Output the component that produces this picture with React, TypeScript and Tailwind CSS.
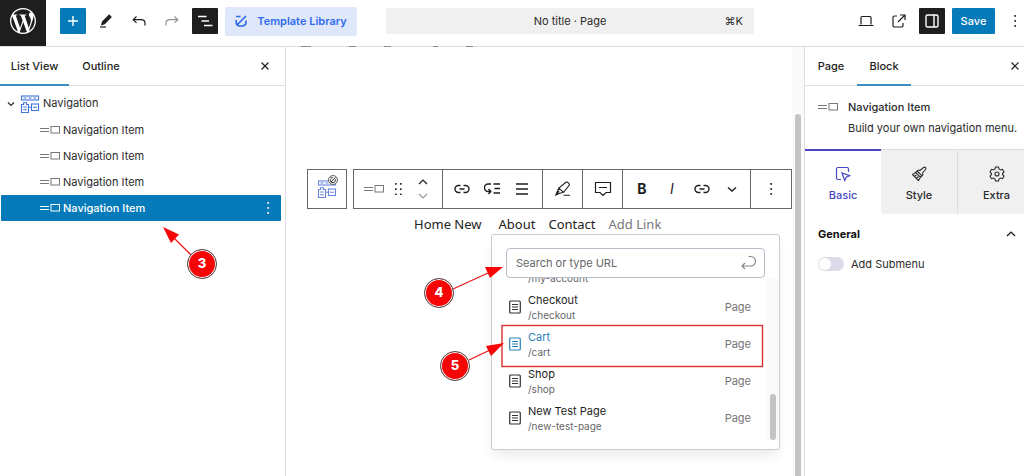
import type { ReactNode } from "react";

type IconProps = { children: ReactNode; size?: string; box?: string; weight?: number };

function Icon({ children, size = "size-4", box = "0 0 16 16", weight = 1.2 }: IconProps) {
  return (
    <svg className={`${size} shrink-0`} viewBox={box} fill="none" stroke="currentColor" strokeWidth={weight} aria-hidden="true">
      {children}
    </svg>
  );
}

const Close = () => (
  <Icon size="size-3" box="0 0 12 12">
    <path d="M2.5 2.5l7 7M9.5 2.5l-7 7" />
  </Icon>
);

const Dots = () => (
  <Icon size="size-4">
    <g fill="currentColor" stroke="none">
      <rect x="7.2" y="2" width="1.9" height="1.9" rx=".8" />
      <rect x="7.2" y="7" width="1.9" height="1.9" rx=".8" />
      <rect x="7.2" y="12" width="1.9" height="1.9" rx=".8" />
    </g>
  </Icon>
);

const ItemGlyph = () => (
  <Icon size="w-5 h-3" box="0 0 20 12" weight={1}>
    <path d="M0 4.500h9M0 7.500h9" />
    <rect x="11" y="2.500" width="8.500" height="6.500" />
  </Icon>
);

const NavGlyph = () => (
  <Icon size="w-5 h-[18px]" box="0 0 20 18" weight={1.1}>
    <rect x="1.5" y="1" width="17" height="4" />
    <path d="M3.5 3h3M8.5 3h3M13.5 3H16" />
    <path d="M1.5 9.5h2V7.7h3v1.8h2v8h-7zM3.2 12h3.600M3.200 14.800h3.600" />
    <rect x="11.500" y="9" width="7" height="6.500" />
    <path d="M13 12.200h4M8.500 12.200h3" />
  </Icon>
);

const Link = () => (
  <Icon weight={1.4}>
    <path d="M6.500 4.500H4.500a3.500 3.500 0 0 0 0 7h2M9.500 4.500h2a3.500 3.500 0 0 1 0 7h-2M5.500 8h5" />
  </Icon>
);

function IconButton({ label, children, dark = false }: { label: string; children: ReactNode; dark?: boolean }) {
  return (
    <button
      aria-label={label}
      className={`flex size-[26px] shrink-0 items-center justify-center rounded-[1px] ${dark ? "bg-[#1e1e1e] text-white" : ""}`}
    >
      {children}
    </button>
  );
}

function TopBar() {
  return (
    <header className="flex h-[47px] shrink-0 items-center border-b border-[#dcdcdc] bg-white">
      <a href="#dashboard" aria-label="Dashboard" className="flex h-[46px] w-[46px] shrink-0 items-center justify-center bg-[#1e1e1e] pb-1 text-white">
        <svg className="size-[26px]" viewBox="0 0 24 24" fill="currentColor" aria-hidden="true">
          <path d="M21.469 6.825c.84 1.537 1.318 3.300 1.318 5.175 0 3.979-2.156 7.456-5.363 9.325l3.295-9.527c.615-1.540.82-2.771.82-3.864 0-.405-.026-.780-.070-1.110m-7.981.105c.647-.030 1.232-.105 1.232-.105.582-.075.514-.930-.067-.899 0 0-1.755.135-2.880.135-1.064 0-2.850-.150-2.850-.150-.585-.030-.661.855-.075.885 0 0 .540.061 1.125.090l1.680 4.605-2.370 7.080L5.354 6.900c.649-.030 1.234-.100 1.234-.100.585-.075.516-.930-.065-.896 0 0-1.746.138-2.874.138-.200 0-.438-.008-.690-.015C4.911 3.150 8.235 1.215 12 1.215c2.809 0 5.365 1.072 7.286 2.833-.046-.003-.091-.009-.141-.009-1.060 0-1.812.923-1.812 1.914 0 .890.513 1.643 1.060 2.531.411.720.890 1.643.890 2.977 0 .915-.354 1.994-.821 3.479l-1.075 3.585-3.900-11.610zM12 22.784c-1.059 0-2.081-.153-3.048-.437l3.237-9.406 3.315 9.087c.024.053.050.101.078.149-1.120.393-2.325.609-3.582.609M1.211 12c0-1.564.336-3.050.935-4.390L7.290 21.709C3.694 19.960 1.212 16.271 1.211 12M12 0C5.385 0 0 5.385 0 12s5.385 12 12 12 12-5.385 12-12S18.615 0 12 0" />
        </svg>
      </a>
      <div className="-mt-1 ml-3.5 flex items-center gap-[7px] text-[#1e1e1e]">
        <button aria-label="Add block" className="flex size-[26px] items-center justify-center rounded-[1px] bg-[#077bba] text-white">
          <Icon weight={1.400}><path d="M8 3v10M3 8h10" /></Icon>
        </button>
        <IconButton label="Tools">
          <Icon>
            <path d="M4.500 9L11.200 2.200l1.800 1.700L6.500 10.800l-2.700.800z" fill="currentColor" />
            <path d="M2 14h6" />
          </Icon>
        </IconButton>
        <IconButton label="Undo">
          <Icon><path d="M5.500 3.500L2.200 6.700l3.300 3.200M2.500 6.700h7.500c2.500 0 4 1.500 4 3.500v2.300" /></Icon>
        </IconButton>
        <IconButton label="Redo">
          <span className="text-[#949494]">
            <Icon><path d="M10.500 3.500l3.300 3.200-3.300 3.200M13.500 6.700H6c-2.500 0-4 1.500-4 3.500v2.300" /></Icon>
          </span>
        </IconButton>
        <IconButton label="Document overview" dark>
          <Icon weight={1.500}><path d="M1 3.500h8.500M4.500 8h7.500M7 12.500h8.500" /></Icon>
        </IconButton>
        <button className="flex h-[29px] w-[132px] items-center justify-center gap-2.5 rounded-[2px] bg-[#dfe7fb] text-[11px] font-semibold whitespace-nowrap text-[#2f6bea]">
          <Icon size="size-3" box="0 0 12 12" weight={1.700}>
            <path d="M1 1.500h4.500M1.200 5v2.500a3.500 3.500 0 0 0 3.500 3.500h2.800a3.500 3.500 0 0 0 3.500-3.500V5.500M1.500 10.500L11 1" />
          </Icon>
          Template Library
        </button>
      </div>
      <button className="-mt-1 mr-[99px] ml-[29px] flex h-[26px] min-w-0 flex-1 items-center rounded-[2px] bg-[#f0f0f0] px-[11px] text-[11px] text-[#2b2b2b]">
        <span className="w-5" />
        <span className="flex-1 text-center">No title · Page</span>
        <span className="w-5 text-right">⌘K</span>
      </button>
      <div className="-mt-1 -mr-1 flex items-center gap-[7px] text-[#1e1e1e]">
        <IconButton label="View">
          <Icon><path d="M3 11.500V4.500a1 1 0 0 1 1-1h8a1 1 0 0 1 1 1v7M.500 12.500h15" /></Icon>
        </IconButton>
        <IconButton label="View page">
          <Icon><path d="M6 3H3.500A1.500 1.500 0 0 0 2 4.500v8A1.500 1.500 0 0 0 3.500 14h7a1.500 1.500 0 0 0 1.500-1.500V10M9 2h5v5M14 2L7 9" /></Icon>
        </IconButton>
        <IconButton label="Settings" dark>
          <Icon weight={1.400}><rect x="2" y="2" width="12" height="12" rx="1.500" /><path d="M10 2v12" /></Icon>
        </IconButton>
        <button className="h-[26px] w-[43px] rounded-[1px] bg-[#077bba] text-[11px] font-medium text-white">Save</button>
        <IconButton label="Options"><Dots /></IconButton>
      </div>
    </header>
  );
}

function ListItem({ selected = false }: { selected?: boolean }) {
  return (
    <li className={`mr-1 ml-px flex h-[26px] items-center rounded-[1px] pr-[5px] pl-[39px] ${selected ? "bg-[#077bba] font-medium text-white" : ""}`}>
      <a href="#item" className="flex flex-1 items-center gap-[3px]">
        <span className={selected ? "text-white" : "text-[#777]"}><ItemGlyph /></span>
        Navigation Item
      </a>
      {selected && <button aria-label="Options for Navigation Item"><Dots /></button>}
    </li>
  );
}

function ListPanel() {
  return (
    <aside className="w-[286px] shrink-0 border-r border-[#dedede] bg-white text-[11px] text-[#2b2b2b]">
      <div className="flex h-[39px] items-stretch border-b border-[#e0e0e0] font-medium text-[#1e1e1e]">
        <button className="-mb-px w-[69px] border-b-2 border-[#3a8fc4] pt-px whitespace-nowrap">List View</button>
        <button className="w-[64px]">Outline</button>
        <button aria-label="Close" className="mr-3.5 ml-auto"><Close /></button>
      </div>
      <ul className="pt-1">
        <li className="flex h-[27px] items-center pl-[5px]">
          <Icon size="size-3" box="0 0 12 12"><path d="M3 4.500l3 3 3-3" /></Icon>
          <span className="ml-[3px] text-[#3f76d8]"><NavGlyph /></span>
          <a href="#navigation" className="ml-[3px]">Navigation</a>
        </li>
        <ListItem />
        <ListItem />
        <ListItem />
        <ListItem selected />
      </ul>
    </aside>
  );
}

function Tool({ label, children, width = "w-[30px]" }: { label: string; children: ReactNode; width?: string }) {
  return (
    <button aria-label={label} className={`${width} flex shrink-0 items-center justify-center`}>
      {children}
    </button>
  );
}

function Toolbar() {
  return (
    <div role="toolbar" aria-label="Block tools" className="flex h-10 gap-1.5 text-[#1e1e1e]">
      <button aria-label="Navigation" className="relative flex w-10 shrink-0 items-center justify-center border border-[#666] text-[#6585e0]">
        <NavGlyph />
        <span className="absolute top-[5px] right-2 rounded-full border border-[#666] bg-[#eee] p-px text-[#222]">
          <Icon size="size-[6px]" box="0 0 12 12" weight={1.800}>
            <path d="M1 1.500h4.500M1.200 5v3l2 3h5l2.500-3V5M1.500 10.500L11 1" />
          </Icon>
        </span>
      </button>
      <div className="flex min-w-0 flex-1 divide-x divide-[#666] border border-[#666]">
        <div className="flex w-[89px] shrink-0 pl-1">
          <Tool label="Navigation Item" width="w-8"><span className="text-[#777]"><ItemGlyph /></span></Tool>
          <Tool label="Drag" width="w-[18px]">
            <Icon>
              <g fill="currentColor" stroke="none">
                {[2, 7.2, 12.4].map((y) => (
                  <g key={y}>
                    <rect x="4" y={y} width="1.700" height="1.700" rx=".5" />
                    <rect x="9" y={y} width="1.700" height="1.700" rx=".5" />
                  </g>
                ))}
              </g>
            </Icon>
          </Tool>
          <div className="flex w-[30px] flex-col items-center justify-center gap-1.5">
            <button aria-label="Move up"><Icon size="w-3 h-2" box="0 0 12 8"><path d="M2 6l4-4 4 4" /></Icon></button>
            <button aria-label="Move down" className="text-[#999]"><Icon size="w-3 h-2" box="0 0 12 8"><path d="M2 2l4 4 4-4" /></Icon></button>
          </div>
        </div>
        <div className="flex w-[100px] shrink-0 px-1">
          <Tool label="Link"><Link /></Tool>
          <Tool label="Add submenu">
            <Icon weight={1.400}><path d="M7 3H4.200a3.400 3.400 0 0 0 0 7.500H6M4.500 8l2.300 2.500L4.500 13M9.500 3H16M10.500 7.500H16M9.500 12H16" /></Icon>
          </Tool>
          <Tool label="Align"><Icon weight={1.400}><path d="M2 3h12M2 8h12M2 13h12" /></Icon></Tool>
        </div>
        <Tool label="Highlight" width="w-10">
          <Icon weight={1.100}><path d="M.8 14l3-6.800L10.800 1.300c1.800-.8 4 1.200 3.400 3L8.600 11.300 4.800 12.300zM3.800 7.200l4.800 4.100M4.800 12.300L.8 14l3.400-3.800M8.500 14.300H15" /></Icon>
        </Tool>
        <Tool label="Comment" width="w-10">
          <Icon size="size-[18px]" box="0 0 18 18"><path d="M1.500 2.500h15v10H12l-3 3-3-3H1.500zM5 7.500h8" /></Icon>
        </Tool>
        <div className="flex min-w-0 flex-1 justify-around px-1">
          <Tool label="Bold"><span className="text-sm font-bold">B</span></Tool>
          <Tool label="Italic"><span className="text-sm italic">I</span></Tool>
          <Tool label="Insert link"><Link /></Tool>
          <Tool label="More"><Icon size="size-3" box="0 0 12 12" weight={1.400}><path d="M2 4.500l4 3.500 4-3.500" /></Icon></Tool>
        </div>
        <Tool label="Options" width="w-10"><Dots /></Tool>
      </div>
    </div>
  );
}

type PageLink = { title?: string; path: string; active?: boolean };

const PAGES: PageLink[] = [
  { path: "/my-account" },
  { title: "Checkout", path: "/checkout" },
  { title: "Cart", path: "/cart", active: true },
  { title: "Shop", path: "/shop" },
  { title: "New Test Page", path: "/new-test-page" },
];

function LinkPopover() {
  return (
    <div className="absolute top-[187px] right-6 w-[289px] rounded-[3px] border border-[#ccc] bg-white pt-[13px] pb-[9px] text-[11px] shadow-[0_8px_12px_-2px_rgba(0,0,0,0.08)]">
      <div className="mx-3.5 flex h-[30px] items-center rounded-[4px] border border-[#b8bcc8] pr-2 pl-[9px]">
        <input aria-label="Search or type URL" placeholder="Search or type URL" className="min-w-0 flex-1 outline-none placeholder:text-[#666]" />
        <button aria-label="Submit" className="text-[#888]">
          <Icon><path d="M8.500 1.500h2.200a4.300 4.300 0 0 1 0 9.500H2M5 8l-3 3 3 3" /></Icon>
        </button>
      </div>
      <div className="flex h-[162px]">
        <ul className="flex flex-1 flex-col justify-end overflow-hidden pb-1">
          {PAGES.map((p) => (
            <li key={p.path} className="shrink-0">
              <button className="flex h-[37px] w-full items-end pr-4 pb-[3px] pl-[17px] text-left">
                {p.title && (
                  <span className={`self-center pt-1 ${p.active ? "text-[#2b83b9]" : "text-[#333]"}`}>
                    <Icon size="w-3 h-3.5" box="0 0 12 14" weight={1.200}>
                      <rect x=".700" y="1" width="10.600" height="12" rx="1" />
                      <path d="M3 4.500h6M3 7h6M3 9.500h6" />
                    </Icon>
                  </span>
                )}
                <span className={p.title ? "ml-[7px] flex-1" : "ml-[19px] flex-1"}>
                  {p.title && (
                    <span className={`block leading-[15px] ${p.active ? "text-[#2b83b9]" : "text-[#1e1e1e]"}`}>{p.title}</span>
                  )}
                  <span className="block text-[10px] leading-[14px] text-[#666]">{p.path}</span>
                </span>
                {p.title && <span className="self-center pt-1 text-[#757575]">Page</span>}
              </button>
            </li>
          ))}
        </ul>
        <div className="flex w-3 flex-col justify-end bg-[#fafafa] pl-[3px]">
          <div className="h-[46px] w-[6px] rounded-full bg-[#c4c4c4]" />
        </div>
      </div>
    </div>
  );
}

function Canvas() {
  return (
    <main className="relative flex min-w-0 flex-1 bg-white">
      <div className="min-w-0 flex-1 pt-[122px] pl-[21px]">
        <Toolbar />
        <nav className="mt-[5px] ml-[107px] flex gap-[13px] font-['Noto_Sans',sans-serif] text-[13px] leading-5 whitespace-nowrap text-[#222]">
          <a href="#home" className="pr-1">Home New</a>
          <a href="#about">About</a>
          <a href="#contact">Contact</a>
          <a href="#add" className="text-[#777]">Add Link</a>
        </nav>
      </div>
      <div className="flex w-3 shrink-0 flex-col items-center bg-[#fafafa] pt-[67px]">
        <div className="w-[6px] flex-1 rounded-t-full bg-[#c4c4c4]" />
      </div>
      <LinkPopover />
    </main>
  );
}

function SettingsPanel() {
  return (
    <aside className="w-[220px] shrink-0 overflow-hidden border-l border-[#dedede] bg-white text-[11px] text-[#2b2b2b]">
      <div className="flex h-[39px] border-b border-[#e0e0e0] font-medium text-[#1e1e1e]">
        <button className="w-[52px]">Page</button>
        <button className="-mb-px w-[54px] border-b-2 border-[#3a8fc4] pt-px">Block</button>
        <button aria-label="Close settings" className="mr-[3px] ml-auto"><Close /></button>
      </div>
      <div className="flex gap-2.5 pt-[11px] pl-[13px] whitespace-nowrap">
        <span className="pt-1 text-[#777]"><ItemGlyph /></span>
        <div className="leading-[21px]">
          <h2 className="font-medium">Navigation Item</h2>
          <p>Build your own navigation menu.</p>
        </div>
      </div>
      <div role="tablist" className="mt-2.5 flex h-[65px] items-stretch font-medium">
        <button role="tab" aria-selected="true" className="flex w-[76px] shrink-0 flex-col items-center gap-[5px] border-t-2 border-[#4747c2] pt-[15px] text-[#4747c2]">
          <Icon>
            <path d="M6 13.500H3a1.500 1.500 0 0 1-1.500-1.500V3A1.500 1.500 0 0 1 3 1.500h9A1.500 1.500 0 0 1 13.500 3v3M7 7l2.700 7.500 1.500-3.300 3.300-1.500z" />
          </Icon>
          Basic
        </button>
        <button role="tab" className="flex w-[77px] shrink-0 flex-col items-center gap-[5px] rounded-bl-[4px] border-t border-r border-[#ddd] bg-[#f0f0f0] pt-4">
          <Icon weight={1.100}>
            <path d="M14 1.200c1 .5 1.200 1.500.5 2.300L11.500 7c.8 1 .5 1.800-.200 2.500L9.500 11.300 4.700 6.500l1.800-1.800c.7-.7 1.700-.9 2.500-.2l3.500-3c.5-.5 1-.5 1.500-.3zM4.700 6.500L1.500 8.500l6 6 2-3.200M6.200 5l4.800 4.800M3.500 10.500l2-1.500M5.500 12.500l2-2" />
          </Icon>
          Style
        </button>
        <button role="tab" className="flex w-[77px] shrink-0 flex-col items-center gap-[5px] border-t border-[#ddd] bg-[#f0f0f0] pt-4">
          <Icon weight={1.100}>
            <path d="M6.500 1h3l.500 2 1.500 1 2-.700L15 6l-1.500 1.500v1L15 10l-1.500 2.700-2-.700-1.500 1-.500 2h-3L6 13l-1.500-1-2 .700L1 10l1.500-1.500v-1L1 6l1.500-2.700 2 .700L6 3z" />
            <circle cx="8" cy="8" r="2" />
          </Icon>
          Extra
        </button>
      </div>
      <button className="flex h-10 w-full items-center justify-between pr-[7px] pl-[13px] font-bold text-[#111]">
        General
        <Icon size="size-3" box="0 0 12 12"><path d="M2 8l4-4 4 4" /></Icon>
      </button>
      <label className="flex items-center gap-[7px] pt-0.5 pl-[13px]">
        <input type="checkbox" className="peer sr-only" />
        <span className="flex h-3.5 w-[26px] items-center rounded-full bg-[#dddbe9] p-px">
          <span className="size-3 rounded-full bg-white" />
        </span>
        Add Submenu
      </label>
    </aside>
  );
}

function Badge({ value, place }: { value: string; place: string }) {
  return (
    <span className={`absolute ${place} flex size-[30px] items-center justify-center rounded-full border border-[#555] bg-[#f50505] text-[13px] font-extrabold text-white ring-1 ring-white ring-inset`}>
      {value}
    </span>
  );
}

export default function App() {
  return (
    <div className="relative flex h-screen flex-col overflow-hidden bg-white font-['Inter','Liberation_Sans',sans-serif]">
      <TopBar />
      <div className="flex min-h-0 flex-1">
        <ListPanel />
        <Canvas />
        <SettingsPanel />
      </div>
      <div className="pointer-events-none absolute top-0 left-0">
        <svg className="absolute top-0 left-0 h-[476px] w-[800px]" viewBox="0 0 800 476" aria-hidden="true">
          <path d="M301 46.500h10M349 46.500h7M384 46.500h7M433 46.500h5M466 46.500h7" stroke="#8a8a8a" />
          <rect x="502" y="325.500" width="260.500" height="41" fill="none" stroke="#dc3030" strokeWidth="1.400" />
          <path d="M192 256L174 238M453 289L488 273M469 360L490 350" stroke="#e81515" strokeWidth="1.300" />
          <path d="M163 227l16 7.500-8 8.500zM503 267l-13 11-5-11zM504 343l-13 13-5-10z" fill="#f50505" />
        </svg>
        <Badge value="3" place="top-[249px] left-[187px]" />
        <Badge value="4" place="top-[278px] left-[424px]" />
        <Badge value="5" place="top-[351px] left-[440px]" />
      </div>
    </div>
  );
}
